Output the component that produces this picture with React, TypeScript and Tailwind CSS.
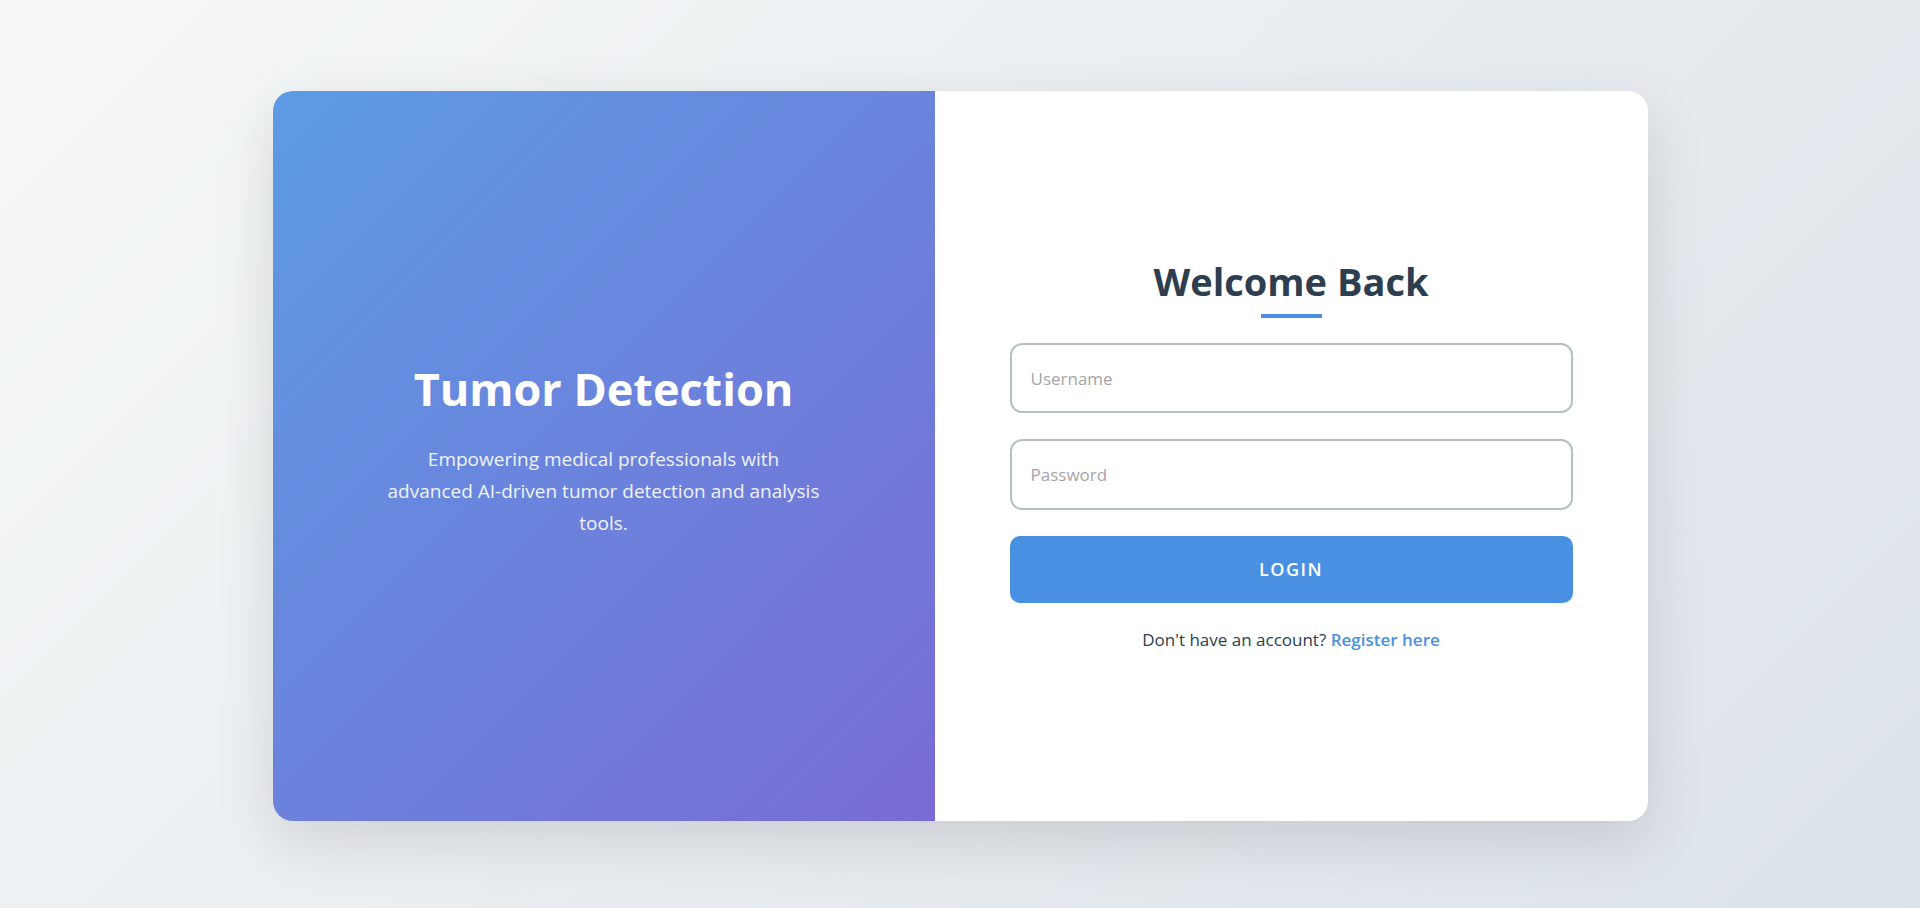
export default function App() {
  return (
    <div
      className="w-full h-[908px] pt-[4px] flex items-center justify-center bg-[linear-gradient(135deg,#f6f8f7_0%,#dce2ea_100%)]"
      style={{ fontFamily: '"Open Sans", "Noto Sans", sans-serif' }}
    >
      <div className="w-[1375px] h-[730px] flex rounded-[20px] overflow-hidden bg-white shadow-[0_20px_60px_rgba(0,0,0,0.12)]">
        {/* left brand panel */}
        <div className="w-[662px] h-full pb-[11px] flex flex-col items-center justify-center text-center text-white bg-[linear-gradient(135deg,#5c9be5_0%,#796bd4_100%)]">
          <h1 className="text-[45px] font-bold leading-[54px]">Tumor Detection</h1>
          <p className="mt-[27px] text-[19px] leading-[32px] text-white/90">
            Empowering medical professionals with
            <br />
            advanced AI-driven tumor detection and analysis
            <br />
            tools.
          </p>
        </div>

        {/* right form panel */}
        <div className="flex-1 h-full pb-[3px] flex flex-col justify-center px-[75px]">
          <h2 className="text-[38px] font-bold leading-[48px] text-center text-[#2c3e50]">
            Welcome Back
          </h2>
          <div className="mx-auto mt-[9px] w-[61px] h-[4px] bg-[#4a90e2]" />

          <input
            type="text"
            placeholder="Username"
            className="mt-[25px] h-[70px] w-full rounded-xl border-2 border-[#b3c0c8] px-[19px] text-[17px] text-[#2c3e50] placeholder:text-[#a5a5a5] outline-none"
          />
          <input
            type="password"
            placeholder="Password"
            className="mt-[26px] h-[71px] w-full rounded-xl border-2 border-[#b3c0c8] px-[19px] text-[17px] text-[#2c3e50] placeholder:text-[#a5a5a5] outline-none"
          />

          <button className="mt-[26px] h-[67px] w-full rounded-[10px] bg-[#4a90e2] text-white text-[18px] font-semibold tracking-[1.5px]">
            LOGIN
          </button>

          <p className="mt-[25px] text-center text-[17px] leading-[24px] text-[#2c3e50]">
            Don't have an account?{" "}
            <a href="#" className="font-semibold text-[#4a90e2]">
              Register here
            </a>
          </p>
        </div>
      </div>
    </div>
  );
}
